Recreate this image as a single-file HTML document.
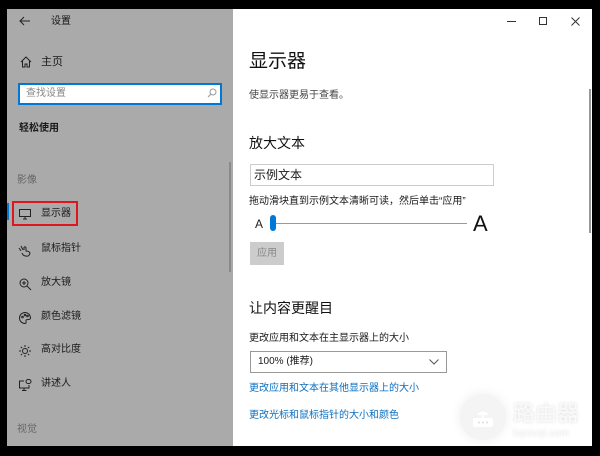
<!DOCTYPE html>
<html><head><meta charset="utf-8">
<style>
*{margin:0;padding:0;box-sizing:border-box}
body{width:600px;height:456px;background:#000;position:relative;overflow:hidden;font-family:"Liberation Sans","Noto Sans CJK SC",sans-serif}
.a{position:absolute}
#left{left:7px;top:9px;width:226px;height:437px;background:#aaaaaa}
#right{left:233px;top:9px;width:359px;height:437px;background:#fff;overflow:hidden}
.t{position:absolute;font-size:10px;color:#1a1a1a;white-space:nowrap;line-height:12px}
.ic{position:absolute;width:14px;height:14px}
.ic svg{width:14px;height:14px;fill:none;stroke:#222;stroke-width:1}
</style></head><body>
<div id="left" class="a">
  <svg class="a" style="left:12px;top:7px" width="12" height="10" viewBox="0 0 12 10"><path d="M11 5H1M5 1L1 5L5 9" fill="none" stroke="#222" stroke-width="1"/></svg>
  <div class="t" style="left:44px;top:7px">设置</div>
  <div class="ic" style="left:12px;top:46px"><svg viewBox="0 0 14 14"><path d="M2 7L7 2L12 7M3.5 6V12H6V9H8V12H10.5V6"/></svg></div>
  <div class="t" style="left:34px;top:47px;font-size:11px">主页</div>
  <div class="a" style="left:11px;top:74px;width:204px;height:22px;background:#fff;border:2px solid #0078d7"></div>
  <div class="t" style="left:19px;top:79px;color:#888">查找设置</div>
  <svg class="a" style="left:200px;top:79px" width="10" height="10" viewBox="0 0 10 10"><circle cx="6" cy="4" r="3" fill="none" stroke="#999"/><path d="M4 6L1 9" stroke="#999"/></svg>
  <div class="t" style="left:12px;top:114px;font-weight:bold;font-size:10px">轻松使用</div>
  <div class="t" style="left:10px;top:166px;color:#666">影像</div>
  <div class="a" style="left:0;top:194px;width:2px;height:17px;background:#0078d7"></div>
  <div class="a" style="left:5px;top:192px;width:66px;height:25px;border:2px solid #e0161e"></div>
  <div class="ic" style="left:11px;top:198px"><svg viewBox="0 0 14 14"><rect x="1.5" y="2.5" width="11" height="7"/><path d="M5 12H9M7 9.5V12"/></svg></div>
  <div class="t" style="left:34px;top:199px">显示器</div>
  <div class="ic" style="left:11px;top:235px"><svg viewBox="0 0 14 14"><path d="M1 4L3 7M3 2L5 6M6 6V3.5Q7 2 8 3.5V7Q11 7 12 9Q11 13 8 12Q5 12 4 9"/></svg></div>
  <div class="t" style="left:34px;top:234px">鼠标指针</div>
  <div class="ic" style="left:11px;top:268px"><svg viewBox="0 0 14 14"><circle cx="6" cy="6" r="4"/><path d="M9 9L13 13M4 6H8M6 4V8"/></svg></div>
  <div class="t" style="left:34px;top:268px">放大镜</div>
  <div class="ic" style="left:11px;top:302px"><svg viewBox="0 0 14 14"><path d="M7 1.5A5.5 5.5 0 1 0 7 12.5Q8.5 12.5 8 10.5Q7.5 8.5 10 8.5Q12.5 8.5 12.5 7A5.5 5.5 0 0 0 7 1.5Z"/><circle cx="4.5" cy="6" r=".8"/><circle cx="7" cy="4" r=".8"/><circle cx="9.5" cy="5" r=".8"/></svg></div>
  <div class="t" style="left:34px;top:302px">颜色滤镜</div>
  <div class="ic" style="left:11px;top:335px"><svg viewBox="0 0 14 14"><circle cx="7" cy="7" r="2.5"/><path d="M7 1V3M7 11V13M1 7H3M11 7H13M2.8 2.8L4.2 4.2M9.8 9.8L11.2 11.2M2.8 11.2L4.2 9.8M9.8 4.2L11.2 2.8"/></svg></div>
  <div class="t" style="left:34px;top:335px">高对比度</div>
  <div class="ic" style="left:11px;top:369px"><svg viewBox="0 0 14 14"><path d="M6 3H1.5V10H11V7M4 12.5H8.5M6 10V12.5"/><rect x="8" y="1.5" width="5" height="4" rx="2"/></svg></div>
  <div class="t" style="left:34px;top:369px">讲述人</div>
  <div class="t" style="left:10px;top:415px;color:#666">视觉</div>
  <div class="a" style="left:222px;top:153px;width:2px;height:110px;background:#8a8a8a"></div>
</div>
<div id="right" class="a">
  <div class="a" style="left:274px;top:12px;width:9px;height:1px;background:#333"></div>
  <div class="a" style="left:306px;top:8px;width:8px;height:8px;border:1px solid #333"></div>
  <svg class="a" style="left:338px;top:8px" width="9" height="9" viewBox="0 0 9 9"><path d="M0.5 0.5L8.5 8.5M8.5 0.5L0.5 8.5" stroke="#333"/></svg>
  <div class="t" style="left:16px;top:41px;font-size:19px;line-height:24px;color:#111">显示器</div>
  <div class="t" style="left:16px;top:81px;color:#444">使显示器更易于查看。</div>
  <div class="t" style="left:16px;top:125px;font-size:14px;line-height:18px;color:#111">放大文本</div>
  <div class="a" style="left:17px;top:155px;width:244px;height:22px;border:1px solid #ccc"></div>
  <div class="t" style="left:21px;top:159px;font-size:12px;line-height:14px">示例文本</div>
  <div class="t" style="left:16px;top:187px">拖动滑块直到示例文本清晰可读，然后单击“应用”</div>
  <div class="t" style="left:22px;top:208px;font-size:12px;line-height:14px;color:#222">A</div>
  <div class="a" style="left:40px;top:214px;width:194px;height:1px;background:#999"></div>
  <div class="a" style="left:37px;top:206px;width:6px;height:16px;border-radius:3px;background:#0078d7"></div>
  <div class="t" style="left:240px;top:202px;font-size:22px;line-height:26px;color:#111">A</div>
  <div class="a" style="left:17px;top:233px;width:34px;height:23px;background:#ccc"></div>
  <div class="t" style="left:24px;top:239px;color:#888">应用</div>
  <div class="t" style="left:16px;top:290px;font-size:14px;line-height:18px;color:#111">让内容更醒目</div>
  <div class="t" style="left:16px;top:324px">更改应用和文本在主显示器上的大小</div>
  <div class="a" style="left:17px;top:342px;width:197px;height:22px;border:1px solid #999"></div>
  <div class="t" style="left:25px;top:347px">100% (推荐)</div>
  <svg class="a" style="left:196px;top:350px" width="10" height="6" viewBox="0 0 10 6"><path d="M0.5 0.5L5 5L9.5 0.5" fill="none" stroke="#555"/></svg>
  <div class="t" style="left:16px;top:374px;color:#0a6fc2">更改应用和文本在其他显示器上的大小</div>
  <div class="t" style="left:16px;top:401px;color:#0a6fc2">更改光标和鼠标指针的大小和颜色</div>
  <div class="a" style="left:356px;top:80px;width:2px;height:144px;background:#999"></div>
  <div class="a" style="left:227px;top:385px;width:46px;height:46px;border-radius:50%;background:#f4f4f4;box-shadow:0 0 12px rgba(0,0,0,.07)"></div>
  <svg class="a" style="left:237px;top:396px" width="26" height="24" viewBox="0 0 26 24"><path d="M8 10A6 6 0 0 1 18 10M10.5 10A3 3 0 0 1 15.5 10M13 9V14" fill="none" stroke="#fff" stroke-width="1.6"/><rect x="3" y="13" width="20" height="9" rx="2" fill="#fff"/><circle cx="9" cy="17.5" r="1" fill="#ddd"/><circle cx="13" cy="17.5" r="1" fill="#ddd"/><circle cx="17" cy="17.5" r="1" fill="#ddd"/></svg>
  <div class="t" style="left:280px;top:393px;font-size:22px;line-height:24px;color:#fafafa;text-shadow:0 0 3px rgba(0,0,0,.15)">路由器</div>
  <div class="t" style="left:280px;top:418px;font-size:10.5px;line-height:12px;color:#fafafa;text-shadow:0 0 3px rgba(0,0,0,.15)">luyouqi.com</div>
</div>
</body></html>
